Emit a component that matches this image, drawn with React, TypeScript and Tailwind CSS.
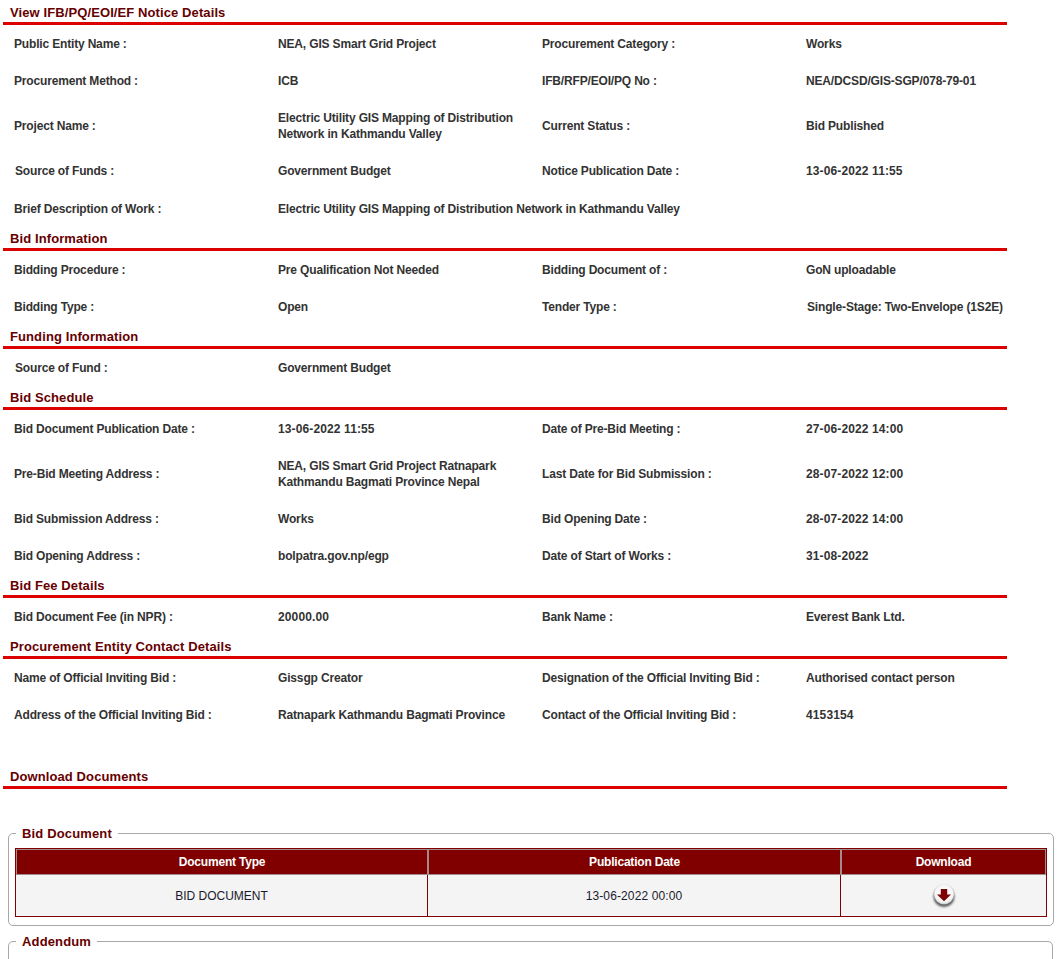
const font = "font-['Liberation_Sans',Arial,sans-serif]";

type Cell = { label: string; value: string[]; shift?: boolean; valueShift?: boolean };

const isNumeric = (s: string) => /^[\d:. -]+$/.test(s);

function Heading({ title, className = "h-6" }: { title: string; className?: string }) {
  return (
    <div className={`ml-[3px] w-[1004px] border-b-[3px] border-[#dc0000] pl-[7px] flex items-end ${className}`}>
      <h2 className="text-[13px] font-bold leading-[18px] tracking-[0.1px] text-[#660000]">{title}</h2>
    </div>
  );
}

function Row({ cells, tall, nudge }: { cells: Cell[]; tall?: boolean; nudge?: boolean }) {
  return (
    <div className={`ml-[14px] grid grid-cols-[264px_264px_264px_264px] items-center text-xs font-bold text-[#333333] ${tall ? "h-[53px]" : "h-[37px]"} ${nudge ? "pt-[2px]" : ""}`}>
      {cells.map((c, i) => (
        <div key={i} className="contents">
          <div className={`tracking-[-0.17px] ${c.shift ? "pl-px" : ""}`}>{c.label}</div>
          <div className={`leading-4 whitespace-nowrap ${isNumeric(c.value[0]) ? "tracking-[0.12px]" : "tracking-[-0.16px]"} ${c.valueShift ? "pl-px" : ""}`}>
            {c.value.map((v) => <div key={v}>{v}</div>)}
          </div>
        </div>
      ))}
    </div>
  );
}

function Fieldset({ legend, children, boxClass }: { legend: string; children?: React.ReactNode; boxClass: string }) {
  return (
    <fieldset className={`mx-2 w-[1045px] rounded-[5px] border border-[#a8a8a8] px-[6px] ${boxClass}`}>
      <legend className="ml-px px-[6px] text-[13px] font-bold leading-[15px] tracking-[0.15px] text-[#660000]">{legend}</legend>
      {children}
    </fieldset>
  );
}

function DownloadIcon() {
  return (
    <svg width="26" height="26" viewBox="0 0 26 26" className="mx-auto block">
      <defs>
        <radialGradient id="dl" cx="50%" cy="42%" r="58%">
          <stop offset="0%" stopColor="#ffffff" />
          <stop offset="78%" stopColor="#f4f4f4" />
          <stop offset="100%" stopColor="#c4c4c4" />
        </radialGradient>
        <filter id="soft" x="-30%" y="-30%" width="160%" height="160%">
          <feGaussianBlur stdDeviation="0.9" />
        </filter>
      </defs>
      <ellipse cx="13" cy="13.5" rx="10.5" ry="10.5" fill="#333333" opacity="0.8" filter="url(#soft)" />
      <circle cx="13" cy="11.5" r="10" fill="url(#dl)" />
      <path d="M9.8 6h6.4v5.6h3.8L13 18.2 6 11.6h3.8z" fill="#7f0000" />
    </svg>
  );
}

export default function App() {
  return (
    <div className={`${font} w-[1063px] h-[959px] overflow-hidden bg-white`}>
      <Heading title="View IFB/PQ/EOI/EF Notice Details" className="h-[25px]" />
      <Row cells={[{ label: "Public Entity Name :", value: ["NEA, GIS Smart Grid Project"] }, { label: "Procurement Category :", value: ["Works"] }]} />
      <Row cells={[{ label: "Procurement Method :", value: ["ICB"] }, { label: "IFB/RFP/EOI/PQ No :", value: ["NEA/DCSD/GIS-SGP/078-79-01"] }]} />
      <Row tall cells={[{ label: "Project Name :", value: ["Electric Utility GIS Mapping of Distribution", "Network in Kathmandu Valley"] }, { label: "Current Status :", value: ["Bid Published"] }]} />
      <Row cells={[{ label: "Source of Funds :", value: ["Government Budget"], shift: true }, { label: "Notice Publication Date :", value: ["13-06-2022 11:55"] }]} />
      <Row nudge cells={[{ label: "Brief Description of Work :", value: ["Electric Utility GIS Mapping of Distribution Network in Kathmandu Valley"] }]} />

      <Heading title="Bid Information" className="h-[25px]" />
      <Row cells={[{ label: "Bidding Procedure :", value: ["Pre Qualification Not Needed"] }, { label: "Bidding Document of :", value: ["GoN uploadable"] }]} />
      <Row cells={[{ label: "Bidding Type :", value: ["Open"] }, { label: "Tender Type :", value: ["Single-Stage: Two-Envelope (1S2E)"], valueShift: true }]} />

      <Heading title="Funding Information" />
      <Row cells={[{ label: "Source of Fund :", value: ["Government Budget"], shift: true }]} />

      <Heading title="Bid Schedule" />
      <Row cells={[{ label: "Bid Document Publication Date :", value: ["13-06-2022 11:55"] }, { label: "Date of Pre-Bid Meeting :", value: ["27-06-2022 14:00"] }]} />
      <Row tall cells={[{ label: "Pre-Bid Meeting Address :", value: ["NEA, GIS Smart Grid Project Ratnapark", "Kathmandu Bagmati Province Nepal"] }, { label: "Last Date for Bid Submission :", value: ["28-07-2022 12:00"] }]} />
      <Row cells={[{ label: "Bid Submission Address :", value: ["Works"] }, { label: "Bid Opening Date :", value: ["28-07-2022 14:00"] }]} />
      <Row cells={[{ label: "Bid Opening Address :", value: ["bolpatra.gov.np/egp"] }, { label: "Date of Start of Works :", value: ["31-08-2022"] }]} />

      <Heading title="Bid Fee Details" />
      <Row cells={[{ label: "Bid Document Fee (in NPR) :", value: ["20000.00"] }, { label: "Bank Name :", value: ["Everest Bank Ltd."] }]} />

      <Heading title="Procurement Entity Contact Details" />
      <Row cells={[{ label: "Name of Official Inviting Bid :", value: ["Gissgp Creator"] }, { label: "Designation of the Official Inviting Bid :", value: ["Authorised contact person"] }]} />
      <Row cells={[{ label: "Address of the Official Inviting Bid :", value: ["Ratnapark Kathmandu Bagmati Province"] }, { label: "Contact of the Official Inviting Bid :", value: ["4153154"] }]} />

      <Heading title="Download Documents" className="h-[56px]" />

      <div className="h-[37px]" />
      <Fieldset legend="Bid Document" boxClass="h-[100px] pt-[8px]">
        <table className="-mt-px w-[1032px] table-fixed border-separate border-spacing-0 border border-[#800000] text-xs">
          <thead>
            <tr className="h-[26px] bg-[#800000] font-bold tracking-[-0.2px] text-white">
              <th className="w-[412px] border border-[#a58c8c] p-0">Document Type</th>
              <th className="w-[413px] border border-[#a58c8c] p-0">Publication Date</th>
              <th className="border border-[#a58c8c] p-0">Download</th>
            </tr>
          </thead>
          <tbody>
            <tr className="h-[41px] bg-[#f4f4f4] text-center text-[#1a1a2e]">
              <td className="border-r border-[#800000] p-0">BID DOCUMENT</td>
              <td className="border-r border-[#800000] p-0 tracking-[0.12px]">13-06-2022 00:00</td>
              <td className="p-0"><DownloadIcon /></td>
            </tr>
          </tbody>
        </table>
      </Fieldset>
      <div className="h-[8px]" />
      <Fieldset legend="Addendum" boxClass="h-[60px]" />
    </div>
  );
}
